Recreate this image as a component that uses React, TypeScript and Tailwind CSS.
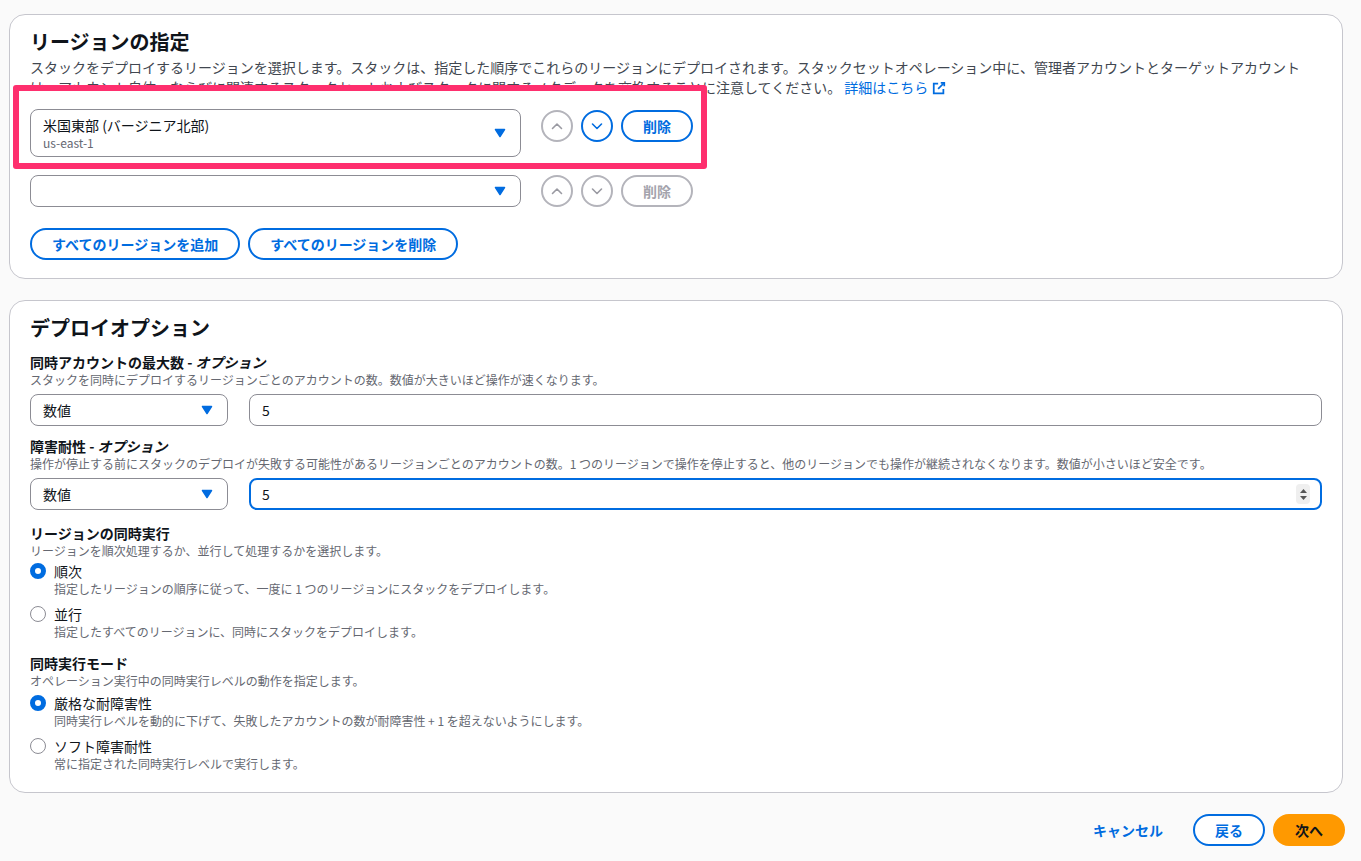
import type { ReactNode } from 'react'

// ── Small drawings ────────────────────────────────────────────────────────────

function Caret() {
  return (
    <svg width="12" height="10" viewBox="0 0 12 10" className="shrink-0">
      <path d="M1.5 1.5h9L6 8.5z" fill="#006ce0" stroke="#006ce0" strokeWidth="1.5" strokeLinejoin="round" />
    </svg>
  )
}

function ExternalIcon() {
  return (
    <svg width="14" height="14" viewBox="0 0 16 16" fill="none" stroke="#006ce0" strokeWidth="2" className="ml-1 inline-block align-[-2px]">
      <path d="M10 2h4v4" />
      <path d="M7 9l7-7" />
      <path d="M13 9v5H2V3h5" />
    </svg>
  )
}

function ArrowButton({ dir, active }: { dir: 'up' | 'down'; active?: boolean }) {
  const color = active ? '#006ce0' : '#9a9aa2'
  return (
    <button
      className={[
        'flex h-8 w-8 items-center justify-center rounded-full border-2 bg-white',
        active ? 'border-[#006ce0]' : 'border-[#b4b4bb]',
      ].join(' ')}
    >
      <svg width="16" height="16" viewBox="0 0 16 16" fill="none" stroke={color} strokeWidth="1.6" strokeLinecap="round" strokeLinejoin="round">
        <path d={dir === 'up' ? 'M3.5 10.5L8 6l4.5 4.5' : 'M3.5 6L8 10.5 12.5 6'} />
      </svg>
    </button>
  )
}

function DeleteButton({ active }: { active?: boolean }) {
  return (
    <button
      className={[
        'h-8 w-[72px] rounded-full border-2 bg-white text-sm font-bold',
        active ? 'border-[#006ce0] text-[#006ce0]' : 'border-[#b4b4bb] text-[#a4a4ad]',
      ].join(' ')}
    >
      削除
    </button>
  )
}

function Radio({ checked, label, desc }: { checked?: boolean; label: string; desc: string }) {
  return (
    <div>
      <div className="flex items-start gap-2">
        <span
          className={[
            'mt-[2px] h-4 w-4 shrink-0 rounded-full bg-white',
            checked ? 'border-[5px] border-[#006ce0]' : 'border-[1.5px] border-[#8c8c94]',
          ].join(' ')}
        />
        <span className="text-sm leading-5 text-[#0f141a]">{label}</span>
      </div>
      <p className="pl-6 text-xs leading-4 text-[#656871]">{desc}</p>
    </div>
  )
}

function Field({ label, desc, children }: { label: ReactNode; desc: string; children: ReactNode }) {
  return (
    <div>
      <div className="text-sm font-bold leading-5 text-[#0f141a]">{label}</div>
      <p className="text-xs leading-4 text-[#656871]">{desc}</p>
      {children}
    </div>
  )
}

function NumberSelect() {
  return (
    <div className="flex h-8 w-[198px] shrink-0 items-center justify-between rounded-lg border border-[#8c8c94] bg-white pl-3 pr-[14px] text-sm text-[#0f141a]">
      <span>数値</span>
      <Caret />
    </div>
  )
}

// ── Page ──────────────────────────────────────────────────────────────────────

export default function App() {
  return (
    <div className="min-h-[861px] bg-[#fafafa] pl-[9px] pr-[18px] pt-[14px] font-['Noto_Sans_CJK_JP','Noto_Sans',sans-serif] text-[#0f141a]">
      {/* Region selection */}
      <section className="rounded-2xl border border-[#c6c6cd] bg-white px-5 pb-[18px] pt-[15px]">
        <h2 className="text-xl font-bold leading-6">リージョンの指定</h2>
        <p className="mt-[3px] text-sm leading-5 text-[#414750]">
          スタックをデプロイするリージョンを選択します。スタックは、指定した順序でこれらのリージョンにデプロイされます。スタックセットオペレーション中に、管理者アカウントとターゲットアカウント
          <br />
          は、アカウント自体、ならびに関連するスタックセットおよびスタックに関するメタデータを交換することに注意してください。{' '}
          <a className="text-[#006ce0]">
            詳細はこちら
            <ExternalIcon />
          </a>
        </p>

        {/* Row 1, highlighted */}
        <div className="relative mt-3">
          <div className="absolute left-[-17px] top-[-24px] h-[84px] w-[694px] rounded-[3px] border-[6px] border-[#fe2f6e] bg-white" />
          <div className="relative flex items-start">
            <div className="flex h-12 w-[491px] items-center justify-between rounded-lg border border-[#8c8c94] bg-white pl-3 pr-[14px]">
              <div>
                <div className="text-sm leading-5">米国東部 (バージニア北部)</div>
                <div className="text-xs leading-4 text-[#656871]">us-east-1</div>
              </div>
              <Caret />
            </div>
            <div className="ml-5 mt-px flex gap-2">
              <ArrowButton dir="up" />
              <ArrowButton dir="down" active />
              <DeleteButton active />
            </div>
          </div>
        </div>

        {/* Row 2 */}
        <div className="mt-[18px] flex items-start">
          <div className="flex h-8 w-[491px] items-center justify-end rounded-lg border border-[#8c8c94] bg-white pr-[14px]">
            <Caret />
          </div>
          <div className="ml-5 flex gap-2">
            <ArrowButton dir="up" />
            <ArrowButton dir="down" />
            <DeleteButton />
          </div>
        </div>

        <div className="mt-[21px] flex gap-2">
          <button className="h-8 rounded-full border-2 border-[#006ce0] px-5 text-sm font-bold text-[#006ce0]">
            すべてのリージョンを追加
          </button>
          <button className="h-8 rounded-full border-2 border-[#006ce0] px-5 text-sm font-bold text-[#006ce0]">
            すべてのリージョンを削除
          </button>
        </div>
      </section>

      {/* Deploy options */}
      <section className="mt-[21px] rounded-2xl border border-[#c6c6cd] bg-white px-5 pb-5 pt-[15px]">
        <h2 className="text-xl font-bold leading-6">デプロイオプション</h2>

        <div className="mt-3">
          <Field
            label={<>同時アカウントの最大数 - <i>オプション</i></>}
            desc="スタックを同時にデプロイするリージョンごとのアカウントの数。数値が大きいほど操作が速くなります。"
          >
            <div className="mt-1.5 flex gap-[21px]">
              <NumberSelect />
              <input
                defaultValue="5"
                className="h-8 flex-1 rounded-lg border border-[#8c8c94] bg-white px-3 text-sm text-[#0f141a] outline-none"
              />
            </div>
          </Field>
        </div>

        <div className="mt-[10px]">
          <Field
            label={<>障害耐性 - <i>オプション</i></>}
            desc="操作が停止する前にスタックのデプロイが失敗する可能性があるリージョンごとのアカウントの数。1 つのリージョンで操作を停止すると、他のリージョンでも操作が継続されなくなります。数値が小さいほど安全です。"
          >
            <div className="mt-1.5 flex gap-[21px]">
              <NumberSelect />
              <div className="flex h-8 flex-1 items-center rounded-lg border-2 border-[#006ce0] bg-white pl-[11px] pr-[10px]">
                <input defaultValue="5" className="flex-1 bg-transparent text-sm text-[#0f141a] outline-none" />
                <div className="flex h-5 w-[14px] flex-col items-center justify-center gap-[3px] rounded-sm bg-[#efefef]">
                  <svg width="7" height="4" viewBox="0 0 7 4"><path d="M0 4L3.5 0 7 4z" fill="#555" /></svg>
                  <svg width="7" height="4" viewBox="0 0 7 4"><path d="M0 0h7L3.5 4z" fill="#555" /></svg>
                </div>
              </div>
            </div>
          </Field>
        </div>

        <div className="mt-[13px]">
          <div className="text-sm font-bold leading-5">リージョンの同時実行</div>
          <p className="text-xs leading-4 text-[#656871]">リージョンを順次処理するか、並行して処理するかを選択します。</p>
          <div className="mt-[2px] flex flex-col gap-[7px]">
            <Radio checked label="順次" desc="指定したリージョンの順序に従って、一度に 1 つのリージョンにスタックをデプロイします。" />
            <Radio label="並行" desc="指定したすべてのリージョンに、同時にスタックをデプロイします。" />
          </div>
        </div>

        <div className="mt-[13px]">
          <div className="text-sm font-bold leading-5">同時実行モード</div>
          <p className="text-xs leading-4 text-[#656871]">オペレーション実行中の同時実行レベルの動作を指定します。</p>
          <div className="mt-1 flex flex-col gap-[7px]">
            <Radio checked label="厳格な耐障害性" desc="同時実行レベルを動的に下げて、失敗したアカウントの数が耐障害性 + 1 を超えないようにします。" />
            <Radio label="ソフト障害耐性" desc="常に指定された同時実行レベルで実行します。" />
          </div>
        </div>
      </section>

      {/* Footer actions */}
      <div className="-mr-[2px] mt-[21px] flex justify-end gap-2 pb-4">
        <button className="h-8 px-[22px] text-sm font-bold text-[#006ce0]">キャンセル</button>
        <button className="h-8 rounded-full border-2 border-[#006ce0] bg-white px-5 text-sm font-bold text-[#006ce0]">戻る</button>
        <button className="h-8 rounded-full border-2 border-[#ff9900] bg-[#ff9900] px-5 text-sm font-bold text-[#0f141a]">次へ</button>
      </div>
    </div>
  )
}
